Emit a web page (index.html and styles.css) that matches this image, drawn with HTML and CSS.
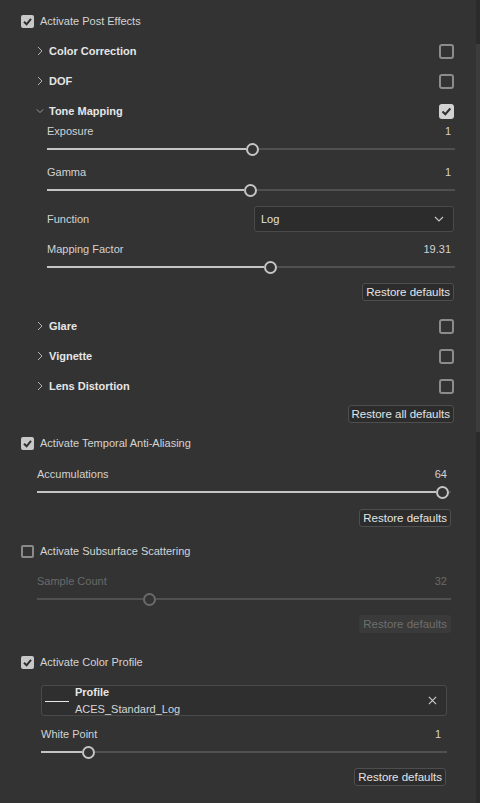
FILE: index.html
```html
<!DOCTYPE html>
<html lang="en">
<head>
  <meta charset="UTF-8">
  <title>Post Effects</title>
  <link rel="stylesheet" href="styles.css">
</head>
<body>
  <div class="window">
    <div class="panel">

      <!-- post effects -->
      <div class="check-row">
        <span class="cb on"><svg viewBox="0 0 13 13"><path d="M3 6.8 L5.6 9.3 L10 3.8"/></svg></span>
        <span class="cb-label">Activate Post Effects</span>
      </div>
      <div class="post">
        <div class="head">
          <span class="chev"><svg viewBox="0 0 8 10"><path d="M2 1 L6 5 L2 9"/></svg></span>
          <span class="head-title">Color Correction</span>
          <span class="box"></span>
        </div>
        <div class="head">
          <span class="chev"><svg viewBox="0 0 8 10"><path d="M2 1 L6 5 L2 9"/></svg></span>
          <span class="head-title">DOF</span>
          <span class="box"></span>
        </div>
        <div class="head">
          <span class="chev"><svg viewBox="0 0 10 8"><path d="M1 2 L5 6 L9 2"/></svg></span>
          <span class="head-title">Tone Mapping</span>
          <span class="box on"><svg viewBox="0 0 15 15"><path d="M3.5 7.5 L6.3 10.2 L11.3 4.5"/></svg></span>
        </div>
        <div class="tone">
          <div class="param">
            <div class="param-top"><span>Exposure</span><span class="val">1</span></div>
            <div class="slider"><span class="fill" style="width:199px"></span><span class="thumb"></span><span class="rest"></span></div>
          </div>
          <div class="param gap10">
            <div class="param-top"><span>Gamma</span><span class="val">1</span></div>
            <div class="slider"><span class="fill" style="width:197px"></span><span class="thumb"></span><span class="rest"></span></div>
          </div>
          <div class="func-row">
            <span>Function</span>
            <div class="select">
              <span>Log</span>
              <svg viewBox="0 0 10 6"><path d="M1 1 L5 5 L9 1"/></svg>
            </div>
          </div>
          <div class="param gap11">
            <div class="param-top"><span>Mapping Factor</span><span class="val">19.31</span></div>
            <div class="slider"><span class="fill" style="width:217px"></span><span class="thumb"></span><span class="rest"></span></div>
          </div>
          <div class="btn-row"><button class="btn">Restore defaults</button></div>
        </div>
        <div class="head first-after">
          <span class="chev"><svg viewBox="0 0 8 10"><path d="M2 1 L6 5 L2 9"/></svg></span>
          <span class="head-title">Glare</span>
          <span class="box"></span>
        </div>
        <div class="head">
          <span class="chev"><svg viewBox="0 0 8 10"><path d="M2 1 L6 5 L2 9"/></svg></span>
          <span class="head-title">Vignette</span>
          <span class="box"></span>
        </div>
        <div class="head">
          <span class="chev"><svg viewBox="0 0 8 10"><path d="M2 1 L6 5 L2 9"/></svg></span>
          <span class="head-title">Lens Distortion</span>
          <span class="box"></span>
        </div>
        <div class="btn-row all"><button class="btn">Restore all defaults</button></div>
      </div>

      <!-- temporal aa -->
      <div class="check-row taa">
        <span class="cb on"><svg viewBox="0 0 13 13"><path d="M3 6.8 L5.6 9.3 L10 3.8"/></svg></span>
        <span class="cb-label">Activate Temporal Anti-Aliasing</span>
      </div>
      <div class="sub">
        <div class="param gap14">
          <div class="param-top"><span>Accumulations</span><span class="val">64</span></div>
          <div class="slider"><span class="fill" style="width:399px"></span><span class="thumb"></span><span class="rest"></span></div>
        </div>
        <div class="btn-row b10"><button class="btn">Restore defaults</button></div>
      </div>

      <!-- subsurface -->
      <div class="check-row sss">
        <span class="cb"></span>
        <span class="cb-label">Activate Subsurface Scattering</span>
      </div>
      <div class="sub disabled">
        <div class="param gap13">
          <div class="param-top"><span>Sample Count</span><span class="val">32</span></div>
          <div class="slider"><span class="fill" style="width:106px"></span><span class="thumb"></span><span class="rest"></span></div>
        </div>
        <div class="btn-row"><button class="btn" disabled>Restore defaults</button></div>
      </div>

      <!-- color profile -->
      <div class="check-row prof">
        <span class="cb on"><svg viewBox="0 0 13 13"><path d="M3 6.8 L5.6 9.3 L10 3.8"/></svg></span>
        <span class="cb-label">Activate Color Profile</span>
      </div>
      <div class="sub profile-sub">
        <div class="profile">
          <span class="swatch"></span>
          <div class="profile-text">
            <span class="profile-title">Profile</span>
            <span>ACES_Standard_Log</span>
          </div>
          <svg class="close" viewBox="0 0 10 10"><path d="M1 1 L9 9 M9 1 L1 9"/></svg>
        </div>
        <div class="param gap12">
          <div class="param-top"><span>White Point</span><span class="val wp">1</span></div>
          <div class="slider"><span class="fill" style="width:41px"></span><span class="thumb"></span><span class="rest"></span></div>
        </div>
        <div class="btn-row"><button class="btn">Restore defaults</button></div>
      </div>

    </div>
    <div class="scrollbar"><div class="thumb-bar"></div></div>
  </div>
</body>
</html>
```
FILE: styles.css
```css
body {
  margin: 0;
  background: #333333;
  color: #d2d2d2;
  font-family: "Liberation Sans", Arial, sans-serif;
  font-size: 11px;
  overflow: hidden;
}
.window {
  display: flex;
  width: 480px;
  height: 803px;
}
.panel {
  width: 476px;
  padding: 10px 0 0 21px;
  box-sizing: border-box;
}
.scrollbar {
  width: 4px;
  background: #2b2b2b;
  padding-top: 44px;
}
.thumb-bar {
  height: 388px;
  background: #3c3c3c;
}

/* checkbox rows */
.check-row {
  display: flex;
  align-items: center;
  height: 22px;
}
.check-row.taa { margin-top: 9px; }
.check-row.sss { margin-top: 13px; }
.check-row.prof { margin-top: 18px; }
.cb {
  width: 13px;
  height: 13px;
  box-sizing: border-box;
  border: 2px solid #8a8a8a;
  border-radius: 2px;
  display: flex;
}
.cb.on {
  background: #c8c8c8;
  border: none;
}
.cb svg, .box svg {
  width: 100%;
  height: 100%;
}
.cb path, .box path {
  fill: none;
  stroke: #2e2e2e;
  stroke-width: 2;
}
.cb-label {
  margin-left: 6px;
  color: #d4d4d4;
}

/* post effect sections */
.post {
  margin: 4px 22px 0 15px;
}
.head {
  display: flex;
  align-items: center;
  height: 30px;
}
.head.first-after { margin-top: 10px; }
.chev {
  width: 13px;
  display: flex;
  align-items: center;
}
.chev svg {
  width: 8px;
  height: 10px;
}
.chev path {
  fill: none;
  stroke: #b4b4b4;
  stroke-width: 1;
}
.head-title {
  font-weight: bold;
  color: #e6e6e6;
  flex: 1;
}
.box {
  width: 15px;
  height: 15px;
  box-sizing: border-box;
  border: 2px solid #8c8c8c;
  border-radius: 3px;
  display: flex;
}
.box.on {
  background: #d2d2d2;
  border: none;
}

.tone {
  margin: -1px -1px 0 11px;
}

/* parameters */
.param-top {
  display: flex;
  justify-content: space-between;
  height: 12px;
  line-height: 12px;
}
.val {
  padding-right: 4px;
}
.val.wp { padding-right: 6px; }
.slider {
  display: flex;
  align-items: center;
  height: 14px;
  margin-top: 5px;
}
.fill {
  height: 2px;
  background: #c4c4c4;
}
.thumb {
  width: 13px;
  height: 13px;
  box-sizing: border-box;
  border: 2px solid #c4c4c4;
  border-radius: 50%;
  flex: none;
}
.rest {
  flex: 1;
  height: 2px;
  background: #505050;
}
.gap10 { margin-top: 10px; }
.gap11 { margin-top: 11px; }
.gap12 { margin-top: 12px; }
.gap13 { margin-top: 13px; }
.gap14 { margin-top: 14px; }

.func-row {
  display: flex;
  align-items: center;
  justify-content: space-between;
  margin-top: 9px;
  padding-right: 1px;
}
.select {
  width: 200px;
  height: 26px;
  box-sizing: border-box;
  border: 1px solid #4a4a4a;
  border-radius: 3px;
  background: #2c2c2c;
  display: flex;
  align-items: center;
  justify-content: space-between;
  padding: 0 9px 0 6px;
  color: #e2e2e2;
}
.select svg {
  width: 10px;
  height: 6px;
}
.select path {
  fill: none;
  stroke: #c4c4c4;
  stroke-width: 1.2;
}

/* buttons */
.btn-row {
  display: flex;
  justify-content: flex-end;
  margin-top: 9px;
}
.tone .btn-row { padding-right: 1px; }
.btn-row.all { margin-top: 4px; }
.btn-row.b10 { margin-top: 10px; }
.btn {
  height: 18px;
  padding: 0 3px;
  box-sizing: border-box;
  border: 1px solid #4e4e4e;
  border-radius: 3px;
  background: #2c2c2c;
  color: #e4e4e4;
  font-family: "Liberation Sans", Arial, sans-serif;
  font-size: 11.5px;
  line-height: 16px;
}
.btn:disabled {
  background: #3a3a3a;
  border-color: #3a3a3a;
  color: #6e6e6e;
}

/* sub blocks */
.sub {
  margin: 0 25px 0 16px;
}
.sub.disabled {
  color: #6a6a6a;
}
.sub.disabled .fill,
.sub.disabled .rest {
  background: #505050;
}
.sub.disabled .thumb {
  border-color: #6a6a6a;
}
.profile-sub {
  margin: 0 29px 0 20px;
}
.profile-sub .btn-row { margin-right: 1px; }
.profile {
  margin-top: 12px;
  height: 31px;
  box-sizing: border-box;
  border: 1px solid #4a4a4a;
  border-radius: 3px;
  background: #2f2f2f;
  display: flex;
  align-items: center;
  padding: 0 9px 0 3px;
}
.swatch {
  width: 24px;
  height: 1px;
  background: #e8e8e8;
  margin-top: 1px;
}
.profile-text {
  flex: 1;
  display: flex;
  flex-direction: column;
  margin-left: 6px;
  line-height: 17px;
  color: #d6d6d6;
}
.profile-title {
  font-weight: bold;
  color: #e6e6e6;
}
.close {
  width: 9px;
  height: 9px;
}
.close path {
  stroke: #cfcfcf;
  stroke-width: 1.2;
}
```
